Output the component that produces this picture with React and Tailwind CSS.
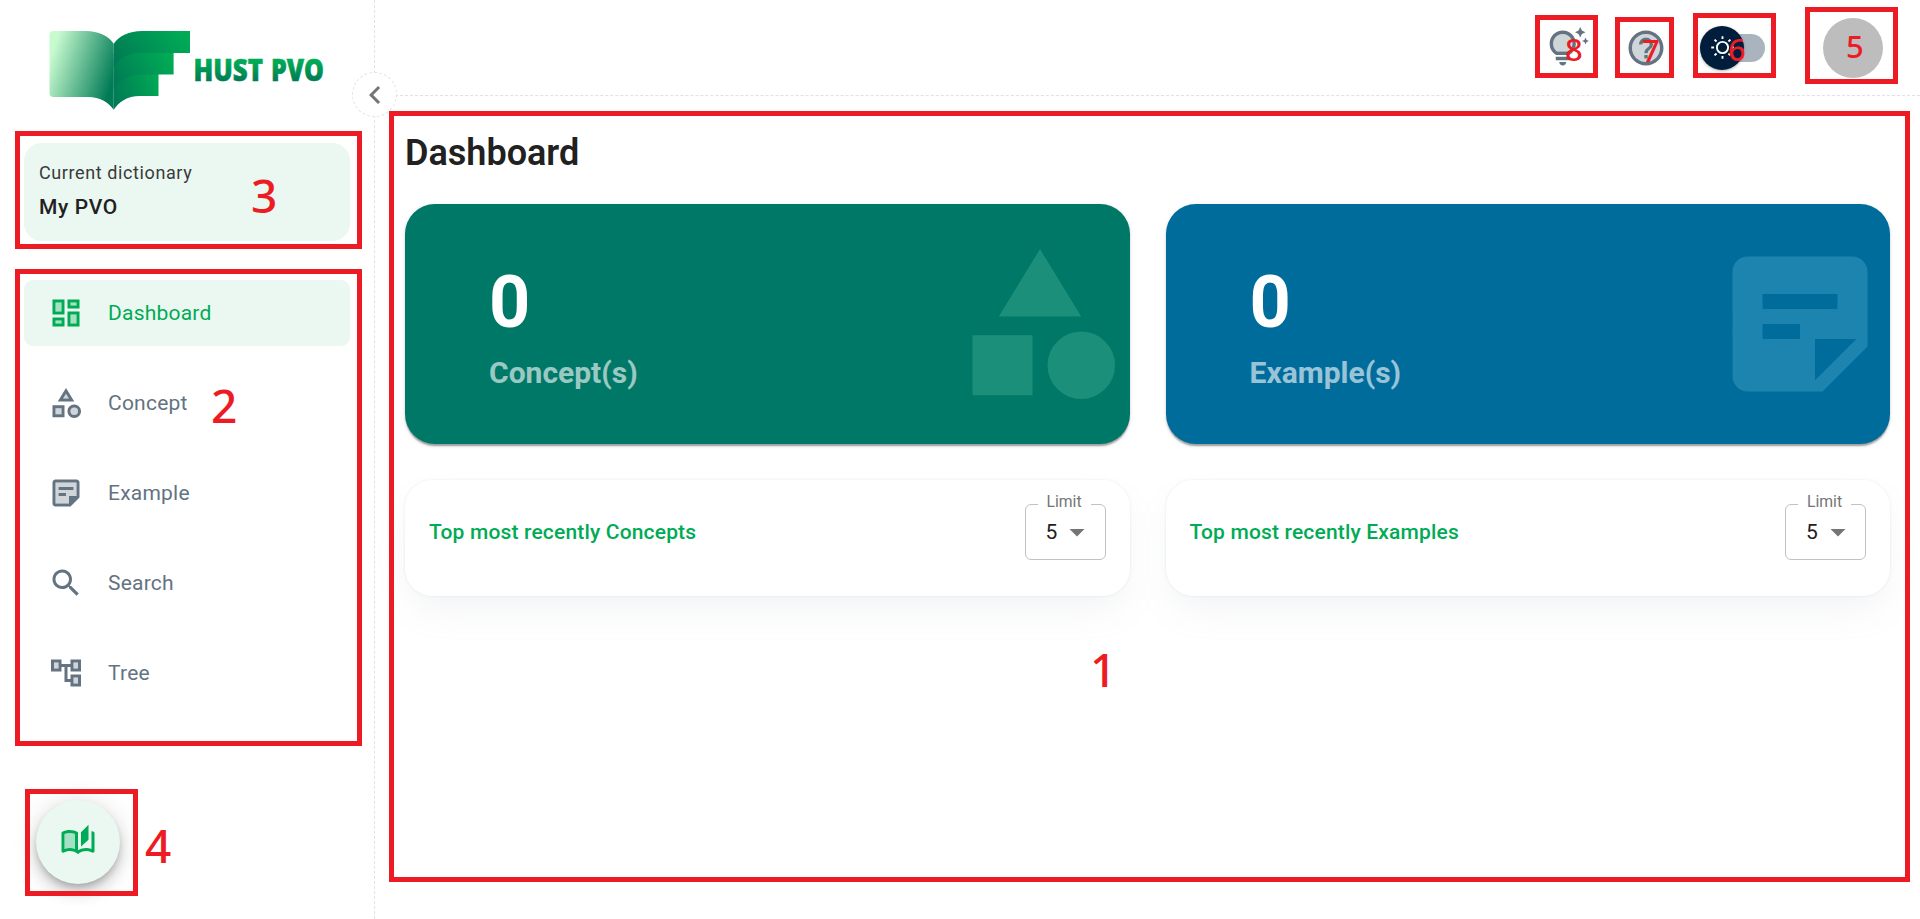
import React from "react";

const ICONS = {
  dashboard: {
    tone: "M5 5h4v6H5zm10 8h4v6h-4zM5 17h4v2H5zM15 5h4v2h-4z",
    line: "M3 13h8V3H3v10zm2-8h4v6H5V5zm8 16h8V11h-8v10zm2-8h4v6h-4v-6zM13 3v6h8V3h-8zm6 4h-4V5h4v2zM3 21h8v-6H3v6zm2-4h4v2H5v-2z",
  },
  concept: {
    tone: "M5 15.5h4v4H5zM12 5.84L10.07 9h3.86zM17.5 15a2.5 2.5 0 1 0 0 5 2.5 2.5 0 0 0 0-5z",
    line: "M12 2l-5.5 9h11L12 2zm0 3.84L13.93 9h-3.87L12 5.84zM17.5 13c-2.49 0-4.5 2.01-4.5 4.5s2.01 4.5 4.5 4.5 4.5-2.01 4.5-4.5-2.01-4.5-4.5-4.5zm0 7a2.5 2.5 0 0 1 0-5 2.5 2.5 0 0 1 0 5zM11 13.5H3v8h8v-8zm-2 6H5v-4h4v4z",
  },
  example: {
    tone: "M5 5v14h9v-5h5V5H5zm7 9H7v-2h5v2zm5-4H7V8h10v2z",
    line: "M19 3H4.99C3.89 3 3 3.9 3 5v14c0 1.1.89 2 1.99 2H15l6-6V5c0-1.1-.9-2-2-2zM5 19V5h14v9h-5v5H5zM17 8v2H7V8h10zm-5 6H7v-2h5v2z",
  },
  search: {
    line: "M15.5 14h-.79l-.28-.27C15.41 12.59 16 11.11 16 9.5 16 5.91 13.09 3 9.5 3S3 5.91 3 9.5 5.91 16 9.5 16c1.61 0 3.09-.59 4.23-1.57l.27.28v.79l5 4.99L20.49 19l-4.99-5zm-6 0C7.01 14 5 11.99 5 9.5S7.01 5 9.5 5 14 7.01 14 9.5 11.99 14 9.5 14z",
  },
  tree: {
    tone: "M4 5h3v4H4zM17 5h3v4h-3zM17 15h3v4h-3z",
    line: "M22 11V3h-7v3H9V3H2v8h7V8h2v10h4v3h7v-8h-7v3h-2V8h2v3h7zM7 9H4V5h3v4zm10 6h3v4h-3v-4zm0-10h3v4h-3V5z",
  },
  book: {
    tone: "M3 6.71v9.91C4.14 16.21 5.31 16 6.5 16s2.36.21 3.5.62v-9.9C8.89 6.25 7.7 6 6.5 6c-1.22 0-2.39.24-3.5.71z",
    line: "M22.47 5.2c-.47-.24-.96-.44-1.47-.61v12.03c-1.14-.41-2.31-.62-3.5-.62-1.9 0-3.78.54-5.5 1.58V5.48C10.38 4.55 8.51 4 6.5 4c-1.79 0-3.48.44-4.97 1.2-.33.16-.53.51-.53.88v12.08c0 .58.47.99 1 .99.16 0 .32-.04.48-.12C3.69 18.4 5.05 18 6.5 18c2.07 0 3.98.82 5.5 2 1.52-1.18 3.43-2 5.5-2 1.45 0 2.81.4 4.02 1.04.16.08.32.12.48.12.52 0 1-.41 1-.99V6.08c0-.37-.2-.72-.53-.88zM10 16.62C8.86 16.21 7.69 16 6.5 16s-2.36.21-3.5.62V6.71C4.11 6.24 5.28 6 6.5 6c1.2 0 2.39.25 3.5.72v9.9zM19 .5l-5 5V15l5-4.5V.5z",
  },
  help: {
    tone: "M12 4c-4.41 0-8 3.59-8 8s3.59 8 8 8 8-3.59 8-8-3.59-8-8-8zm1 14h-2v-2h2v2zm0-3h-2c0-3.25 3-3 3-5 0-1.1-.9-2-2-2s-2 .9-2 2H8c0-2.21 1.79-4 4-4s4 1.79 4 4c0 2.5-3 2.75-3 5z",
    line: "M12 2C6.48 2 2 6.48 2 12s4.48 10 10 10 10-4.48 10-10S17.52 2 12 2zm0 18c-4.41 0-8-3.59-8-8s3.59-8 8-8 8 3.59 8 8-3.59 8-8 8zm-1-4h2v2h-2zm1-10c-2.21 0-4 1.79-4 4h2c0-1.1.9-2 2-2s2 .9 2 2c0 2-3 1.75-3 5h2c0-2.25 3-2.5 3-5 0-2.21-1.79-4-4-4z",
  },
  tips: {
    tone: "M14.5 9.5c0 2.47-1.49 3.89-2.35 4.5h-6.3C4.99 13.39 3.5 11.97 3.5 9.5 3.5 6.47 5.97 4 9 4s5.5 2.47 5.5 5.5z",
    line: "M7 20h4c0 1.1-.9 2-2 2s-2-.9-2-2zm-2-1h8v-2H5v2zm11.5-9.5c0 3.82-2.66 5.86-3.77 6.5H5.27c-1.11-.64-3.77-2.68-3.77-6.5C1.5 5.36 4.86 2 9 2s7.5 3.36 7.5 7.5zm-2 0C14.5 6.47 12.03 4 9 4S3.5 6.47 3.5 9.5c0 2.47 1.49 3.89 2.35 4.5h6.3c.86-.61 2.35-2.03 2.35-4.5zm6.87-2.13L20 8l1.37.63L22 10l.63-1.37L24 8l-1.37-.63L22 6l-.63 1.37zM19 6l.94-2.06L22 3l-2.06-.94L19 0l-.94 2.06L16 3l2.06.94L19 6z",
  },
};

function Icon({ name, className }) {
  const { tone, line } = ICONS[name];
  return (
    <svg viewBox="0 0 24 24" fill="currentColor" className={className}>
      {tone && <path d={tone} opacity=".3" />}
      <path d={line} />
    </svg>
  );
}

function Logo() {
  return (
    <svg viewBox="0 0 300 84" className="h-[84px] w-[300px]">
      <defs>
        <linearGradient id="pageLeft" x1="0" y1="0.2" x2="1" y2="0.6">
          <stop offset="0.06" stopColor="#c8fad0" />
          <stop offset="1" stopColor="#007b55" />
        </linearGradient>
        <linearGradient id="pageRight" x1="0" y1="0.7" x2="1" y2="0.3">
          <stop offset="0" stopColor="#007b55" />
          <stop offset="1" stopColor="#00ab55" />
        </linearGradient>
        <linearGradient id="word" gradientUnits="userSpaceOnUse" x1="0" y1="32" x2="0" y2="54">
          <stop offset="0.1" stopColor="#00ab55" />
          <stop offset="1" stopColor="#007b55" />
        </linearGradient>
      </defs>
      <path d="M67.700 82.800C62 75 54 70 42 70H7.500q-4 0-4-4V8q0-4 4-4h32.500c12 0 23 5 27.700 12.700z" fill="url(#pageLeft)" />
      <path d="M67.700 82.800C73 75 81 69 94 69h18.500V31H67.700z" fill="url(#pageRight)" />
      <path d="M67.700 62C73 54 81 47.500 94 47.500h33.600V26H67.700z" fill="url(#pageRight)" />
      <path d="M67.700 40C73 32 81 26 94 26h50V4H96C83 4 73 9 67.700 16.700z" fill="url(#pageRight)" />
      <g fill="url(#word)" stroke="url(#word)" strokeWidth="0.6" fontSize="30.500" fontWeight="800" className="font-['Open_Sans',sans-serif]">
        <text x="147.500" y="54" textLength="69.500" lengthAdjust="spacingAndGlyphs">HUST</text>
        <text x="225" y="54" textLength="53" lengthAdjust="spacingAndGlyphs">PVO</text>
      </g>
    </svg>
  );
}

const NAV = [
  { icon: "dashboard", label: "Dashboard", active: true },
  { icon: "concept", label: "Concept" },
  { icon: "example", label: "Example" },
  { icon: "search", label: "Search" },
  { icon: "tree", label: "Tree" },
];

function Sidebar() {
  return (
    <aside className="relative flex w-[375px] shrink-0 flex-col border-r border-dashed border-[#dfe3e8] pl-6 pr-6">
      <div className="pl-[22px] pt-[27px]">
        <Logo />
      </div>
      <section className="mt-8 flex h-[98px] w-[326px] flex-col rounded-[18px] bg-[#ebf7f1] pl-[15px] pt-[15px] text-[#212121]">
        <span className="text-[18px] leading-[30px] tracking-[0.0333em] text-[#383b3a]">Current dictionary</span>
        <span className="mt-px text-[21px] font-medium leading-[36px] tracking-[0.0286em]">My PVO</span>
      </section>
      <nav className="mt-[39px] flex w-[326px] flex-col gap-6">
        {NAV.map((n) => (
          <a
            key={n.label}
            className={
              n.active
                ? "flex h-[66px] items-center rounded-[9px] bg-[#ebf7f1] pl-6 text-[#00ab55]"
                : "flex h-[66px] items-center rounded-[9px] pl-6 text-[#637381]"
            }
          >
            <Icon name={n.icon} className="size-9" />
            <span className="ml-6 pt-0.5 text-[21px] tracking-[0.0107em]">{n.label}</span>
          </a>
        ))}
      </nav>
      <button className="absolute bottom-[35px] left-9 flex size-[84px] items-center justify-center rounded-full bg-[#ebf7f1] text-[#00ab55] shadow-[0_4.5px_7.5px_-1.5px_rgba(0,0,0,0.2),0_9px_15px_rgba(0,0,0,0.14),0_1.5px_27px_rgba(0,0,0,0.12)]">
        <Icon name="book" className="size-9" />
      </button>
      <button className="absolute -right-[23px] top-[72px] z-10 flex size-[45px] items-center justify-center rounded-full border border-dashed border-[#dfe3e8] bg-white text-[#757575]">
        <svg viewBox="0 0 24 24" fill="currentColor" className="size-9 shrink-0">
          <path d="M15.410 7.410L14 6l-6 6 6 6 1.410-1.410L10.830 12z" />
        </svg>
      </button>
    </aside>
  );
}

function TopBar() {
  return (
    <header className="flex h-24 shrink-0 items-center justify-end border-b border-dashed border-[#dfe3e8] pr-[37px] text-[#637381]">
      <Icon name="tips" className="size-[42px]" />
      <Icon name="help" className="ml-9 size-[42px]" />
      <div className="ml-[33px] flex w-[65px] items-center">
        <span className="z-10 flex size-11 shrink-0 items-center justify-center rounded-full bg-[#001e3c] text-white shadow-[0_1px_3px_rgba(0,0,0,0.3)]">
          <svg viewBox="0 0 20 20" fill="currentColor" className="size-[27px]">
            <path d="M9.305 1.667V3.750h1.389V1.667h-1.390zm-4.707 1.950l-.982.982L5.090 6.072l.982-.982-1.473-1.473zm10.802 0L13.927 5.090l.982.982 1.473-1.473-.982-.982zM10 5.139a4.872 4.872 0 00-4.862 4.860A4.872 4.872 0 0010 14.862 4.872 4.872 0 0014.860 10 4.872 4.872 0 0010 5.139zm0 1.389A3.462 3.462 0 0113.471 10a3.462 3.462 0 01-3.473 3.472A3.462 3.462 0 016.527 10 3.462 3.462 0 0110 6.528zM1.665 9.305v1.390h2.083v-1.390H1.666zm14.583 0v1.390h2.084v-1.390h-2.084zM5.090 13.928L3.616 15.400l.982.982 1.473-1.473-.982-.982zm9.820 0l-.982.982 1.473 1.473.982-.982-1.473-1.473zM9.305 16.250v2.083h1.389V16.250h-1.390z" />
          </svg>
        </span>
        <span className="-ml-8 h-7 w-[53px] shrink-0 rounded-full bg-[#aab4be]" />
      </div>
      <span className="ml-[58px] size-[60px] rounded-full bg-[#bdbdbd]" />
    </header>
  );
}

function StatCard({ value, label, color, children }) {
  return (
    <div className={`flex h-60 items-center justify-between rounded-[30px] pl-[84px] shadow-[0_3px_1.5px_-1.5px_rgba(0,0,0,0.2),0_1.5px_1.5px_rgba(0,0,0,0.14),0_1.5px_4.5px_rgba(0,0,0,0.12)] ${color}`}>
      <div className="flex flex-col pt-[5px] text-white">
        <span className="text-[72px] font-bold leading-[84px]">{value}</span>
        <span className="mt-2 text-[30px] font-bold leading-[40px] opacity-60">{label}</span>
      </div>
      {children}
    </div>
  );
}

function ListCard({ title }) {
  return (
    <div className="flex h-[116px] items-start justify-between rounded-[27px] bg-white pl-6 pr-6 pt-6 shadow-[0_0_3px_rgba(145,158,171,0.2),0_18px_36px_-6px_rgba(145,158,171,0.12)]">
      <h2 className="mt-3 text-[21px] font-medium leading-[33px] tracking-[0.008em] text-[#00ab55]">{title}</h2>
      <div className="relative flex h-14 w-[81px] items-center rounded-[6px] border border-[#c2c2c2] pl-5 text-[21px] text-[#212121]">
        <span className="pt-px">5</span>
        <svg viewBox="0 0 24 24" fill="#757575" className="ml-0.5 size-9">
          <path d="M7 10l5 5 5-5z" />
        </svg>
        <span className="absolute -top-[13px] left-3 bg-white px-[9px] text-[15.75px] leading-5 text-[#757575]">Limit</span>
      </div>
    </div>
  );
}

function Mark({ className }) {
  return <div className={`pointer-events-none absolute z-20 border-[5px] border-[#ed1c24] ${className}`} />;
}

function Num({ n, className }) {
  return (
    <span className={`pointer-events-none absolute z-30 font-['Noto_Sans','Open_Sans',sans-serif] font-medium leading-none text-[#ed1c24] ${className}`}>
      {n}
    </span>
  );
}

export default function App() {
  return (
    <div className="relative flex h-[919px] w-[1920px] overflow-hidden bg-white font-['Roboto',sans-serif]">
      <Sidebar />
      <div className="flex flex-1 flex-col">
        <TopBar />
        <main className="flex flex-col pl-[30px] pr-[30px] pt-[33px]">
          <h1 className="text-[36px] font-semibold leading-[48px] text-[#212121]">Dashboard</h1>
          <div className="mt-[27px] grid grid-cols-2 gap-9">
            <StatCard value="0" label="Concept(s)" color="bg-[#007867]">
              <svg viewBox="0 0 24 24" fill="#1c8f7a" className="size-[180px]">
                <path d="M12 2l5.500 9h-11z" />
                <circle cx="17.5" cy="17.5" r="4.5" />
                <path d="M3 13.500h8v8H3z" />
              </svg>
            </StatCard>
            <StatCard value="0" label="Example(s)" color="bg-[#006c9c]">
              <svg viewBox="0 0 24 24" fill="#1c84af" className="size-[180px]">
                <path d="M19 3H4.990C3.890 3 3 3.900 3 5l.01 14c0 1.100.89 2 1.990 2h10l6-6V5c0-1.100-.9-2-2-2zM7 8h10v2H7V8zm5 6H7v-2h5v2zm2 5.500V14h5.500L14 19.500z" />
              </svg>
            </StatCard>
            <ListCard title="Top most recently Concepts" />
            <ListCard title="Top most recently Examples" />
          </div>
        </main>
      </div>

      <Mark className="left-[389px] top-[111px] h-[771px] w-[1521px]" />
      <Mark className="left-[15px] top-[269px] h-[477px] w-[347px]" />
      <Mark className="left-[15px] top-[131px] h-[118px] w-[347px]" />
      <Mark className="left-[25px] top-[789px] h-[107px] w-[113px]" />
      <Mark className="left-[1805px] top-[7px] h-[77px] w-[93px]" />
      <Mark className="left-[1693px] top-[13px] h-[65px] w-[83px]" />
      <Mark className="left-[1615px] top-[17px] h-[61px] w-[59px]" />
      <Mark className="left-[1535px] top-[15px] h-[63px] w-[63px]" />
      <Num n="1" className="left-[1090px] top-[646px] text-[46px]" />
      <Num n="2" className="left-[211px] top-[382px] text-[46px]" />
      <Num n="3" className="left-[251px] top-[172px] text-[46px]" />
      <Num n="4" className="left-[145px] top-[822px] text-[46px]" />
      <Num n="5" className="left-[1846px] top-[31px] text-[31px]" />
      <Num n="6" className="left-[1728px] top-[34px] text-[31px]" />
      <Num n="7" className="left-[1642px] top-[35px] text-[31px]" />
      <Num n="8" className="left-[1565px] top-[34px] text-[31px]" />
    </div>
  );
}
